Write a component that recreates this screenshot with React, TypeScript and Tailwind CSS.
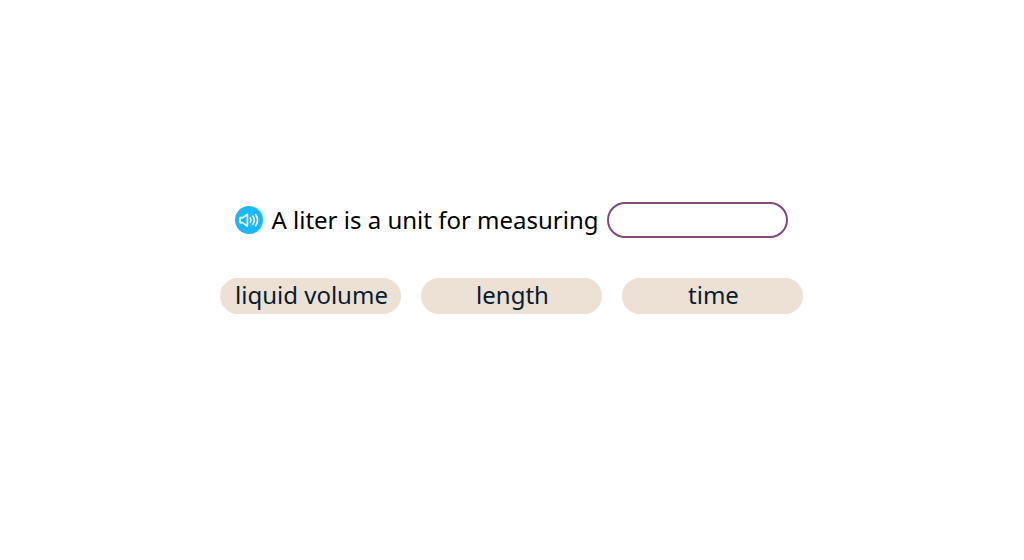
import { useState } from "react";

const choices = ["liquid volume", "length", "time"];

function SpeakerIcon() {
  return (
    <svg
      viewBox="0 0 28 28"
      className="size-7"
      fill="none"
      stroke="white"
      strokeWidth="1.6"
      strokeLinecap="round"
      strokeLinejoin="round"
      aria-hidden="true"
    >
      <path d="M5.1 11.6h2.8l4.5-3.3v11.8l-4.5-3.3H5.1z" />
      <path d="M15.3 11.9c.9 1.400.9 3.100 0 4.500" />
      <path d="M18 10.200c1.700 2.500 1.700 5.400 0 7.900" />
      <path d="M20.600 8.500c2.600 3.700 2.600 7.700 0 11.400" />
    </svg>
  );
}

export default function App() {
  const [answer, setAnswer] = useState("");

  return (
    <main className="flex min-h-screen flex-col items-center justify-center gap-10 bg-white pr-[17px] pb-11 pl-4 font-['Noto_Sans',sans-serif] text-2xl leading-9 text-black">
      <div className="flex flex-wrap items-center justify-center gap-2">
        <button
          type="button"
          aria-label="Read the question aloud"
          className="size-7 shrink-0 rounded-full bg-[#1ab7fb]"
        >
          <SpeakerIcon />
        </button>
        <label htmlFor="answer">A liter is a unit for measuring</label>
        <input
          id="answer"
          type="text"
          readOnly
          value={answer}
          className="h-9 w-[181px] rounded-full border-2 border-[#804a7c] bg-white px-3 text-center outline-none"
        />
      </div>
      <div className="flex flex-wrap justify-center gap-5">
        {choices.map((choice) => (
          <button
            key={choice}
            type="button"
            onClick={() => setAnswer(choice)}
            className="h-9 w-[181px] rounded-full bg-[#ede0d5] pb-0.5 pl-0.5 leading-8 text-[#071d2e]"
          >
            {choice}
          </button>
        ))}
      </div>
    </main>
  );
}
